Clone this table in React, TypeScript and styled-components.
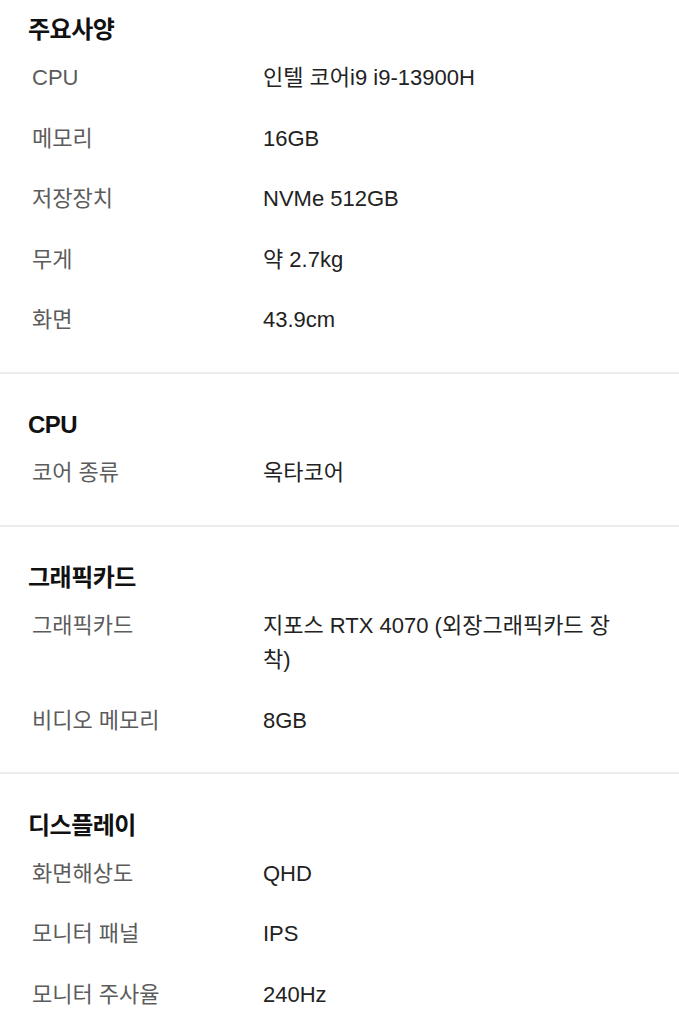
import styled, { createGlobalStyle } from "styled-components";

const GlobalStyle = createGlobalStyle`
  body {
    margin: 0;
    background: #ffffff;
    font-family: "Liberation Sans", "Noto Sans CJK KR", sans-serif;
  }
`;

const Page = styled.div`
  display: flex;
  flex-direction: column;
  width: 679px;
`;

const Section = styled.section<{ $first?: boolean }>`
  display: flex;
  flex-direction: column;
  padding: ${p => (p.$first ? "12px" : "33.5px")} 59px 21px 28px;
  border-bottom: 2px solid #ececec;
  &:last-child {
    border-bottom: none;
  }
`;

const SectionTitle = styled.h2`
  margin: 0;
  font-size: 24px;
  line-height: 36px;
  font-weight: 700;
  color: #111111;
  letter-spacing: -0.5px;
`;

const Row = styled.div`
  display: grid;
  grid-template-columns: 231px 1fr;
  align-items: start;
  padding: 13.25px 0 13.25px 4px;
`;

const Label = styled.div`
  font-size: 22px;
  line-height: 34px;
  color: #5c5c5c;
`;

const Value = styled.div`
  font-size: 22px;
  line-height: 34px;
  color: #222222;
`;

type Spec = { label: string; value: string };

const sections: { title: string; rows: Spec[] }[] = [
  {
    title: "주요사양",
    rows: [
      { label: "CPU", value: "인텔 코어i9 i9-13900H" },
      { label: "메모리", value: "16GB" },
      { label: "저장장치", value: "NVMe 512GB" },
      { label: "무게", value: "약 2.7kg" },
      { label: "화면", value: "43.9cm" },
    ],
  },
  {
    title: "CPU",
    rows: [{ label: "코어 종류", value: "옥타코어" }],
  },
  {
    title: "그래픽카드",
    rows: [
      { label: "그래픽카드", value: "지포스 RTX 4070 (외장그래픽카드 장착)" },
      { label: "비디오 메모리", value: "8GB" },
    ],
  },
  {
    title: "디스플레이",
    rows: [
      { label: "화면해상도", value: "QHD" },
      { label: "모니터 패널", value: "IPS" },
      { label: "모니터 주사율", value: "240Hz" },
    ],
  },
];

const App = () => (
  <>
    <GlobalStyle />
    <Page>
      {sections.map((s, i) => (
        <Section key={s.title} $first={i === 0}>
          <SectionTitle>{s.title}</SectionTitle>
          {s.rows.map(r => (
            <Row key={r.label}>
              <Label>{r.label}</Label>
              <Value>{r.value}</Value>
            </Row>
          ))}
        </Section>
      ))}
    </Page>
  </>
);

export default App;
